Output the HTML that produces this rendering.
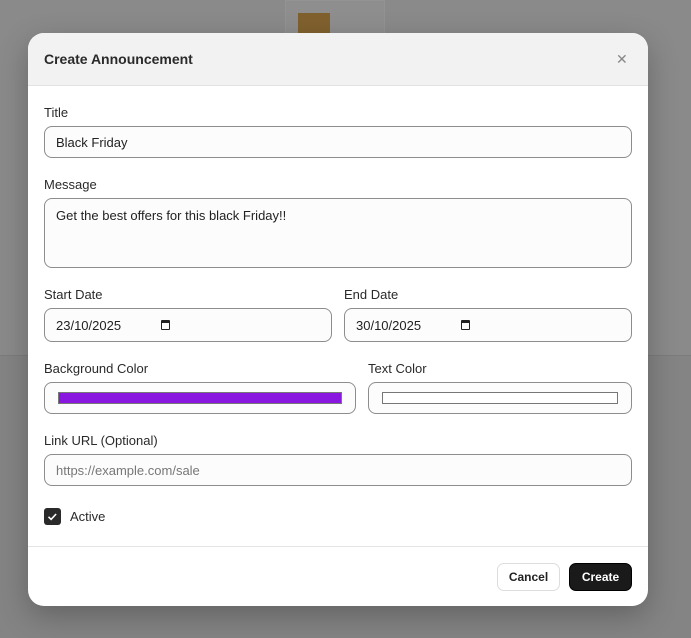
<!DOCTYPE html><html><head><style>
*{box-sizing:border-box;margin:0;padding:0}
body{width:691px;height:638px;background:#8a8a8a;font-family:"Liberation Sans",sans-serif;position:relative;overflow:hidden;color:#2a2a2a}
.bgline{position:absolute;left:0;right:0;top:355px;height:283px;background:#848484;border-top:1px solid #7c7c7c}
.card{position:absolute;left:285px;top:0;width:100px;height:40px;background:#8e8e8e;border:1px solid #939393}
.sq{position:absolute;left:298px;top:13px;width:32px;height:30px;background:#80612e}
.modal{position:absolute;left:28px;top:33px;width:620px;height:573px;background:#fff;border-radius:16px;overflow:hidden;box-shadow:0 10px 30px rgba(0,0,0,.25)}
.hd{height:53px;background:#f2f2f2;border-bottom:1px solid #e2e2e2;position:relative}
.hd h1{position:absolute;left:16px;top:18px;font-size:14px;font-weight:bold;color:#2a2a2a}
.x{position:absolute;left:588px;top:18px;font-size:14px;color:#888}
.l{position:absolute;font-size:13px;color:#2a2a2a}
.i{position:absolute;border:1px solid #8d8d8d;border-radius:8px;background:#fcfcfc;font-size:13px;padding-left:11px;display:flex;align-items:center;color:#222}
.ft{position:absolute;left:0;right:0;top:513px;border-top:1px solid #e4e4e4}
.b{position:absolute;top:530px;height:28px;border-radius:7px;font-size:12px;font-weight:bold;display:flex;align-items:center;justify-content:center}
</style></head><body>
<div class="bgline"></div><div class="card"></div><div class="sq"></div>
<div class="modal">
<div class="hd"><h1>Create Announcement</h1><div class="x">✕</div></div>
<div class="l" style="left:16px;top:72px">Title</div>
<div class="i" style="left:16px;top:93px;width:588px;height:32px">Black Friday</div>
<div class="l" style="left:16px;top:144px">Message</div>
<div class="i" style="left:16px;top:165px;width:588px;height:70px;align-items:flex-start;padding-top:9px">Get the best offers for this black Friday!!</div>
<div class="l" style="left:16px;top:254px">Start Date</div>
<div class="i" style="left:16px;top:275px;width:288px;height:34px">23/10/2025<span style="margin-left:40px;display:inline-block;width:9px;height:10px;border:1.5px solid #222;border-top-width:3px;border-radius:1px"></span></div>
<div class="l" style="left:316px;top:254px">End Date</div>
<div class="i" style="left:316px;top:275px;width:288px;height:34px">30/10/2025<span style="margin-left:40px;display:inline-block;width:9px;height:10px;border:1.5px solid #222;border-top-width:3px;border-radius:1px"></span></div>
<div class="l" style="left:16px;top:328px">Background Color</div>
<div class="i" style="left:16px;top:349px;width:312px;height:32px;padding:0 13px"><div style="width:100%;height:12px;background:#8a17e0;border:1px solid #777"></div></div>
<div class="l" style="left:340px;top:328px">Text Color</div>
<div class="i" style="left:340px;top:349px;width:264px;height:32px;padding:0 13px"><div style="width:100%;height:12px;background:#fff;border:1px solid #777"></div></div>
<div class="l" style="left:16px;top:400px">Link URL (Optional)</div>
<div class="i" style="left:16px;top:421px;width:588px;height:32px;color:#777">https://example.com/sale</div>
<div style="position:absolute;left:16px;top:475px;width:17px;height:17px;background:#2a2a2a;border-radius:3px"><svg width="17" height="17" viewBox="0 0 17 17"><path d="M4.5 8.8l2.6 2.6 5-5.4" stroke="#fff" stroke-width="1.6" fill="none"/></svg></div>
<div class="l" style="left:42px;top:476px">Active</div>
<div class="ft"></div>
<div class="b" style="left:469px;width:63px;border:1px solid #ddd;background:#fff;color:#222">Cancel</div>
<div class="b" style="left:541px;width:63px;background:#1a1a1a;color:#fff;border:1px solid #000">Create</div>
</div>
</body></html>
